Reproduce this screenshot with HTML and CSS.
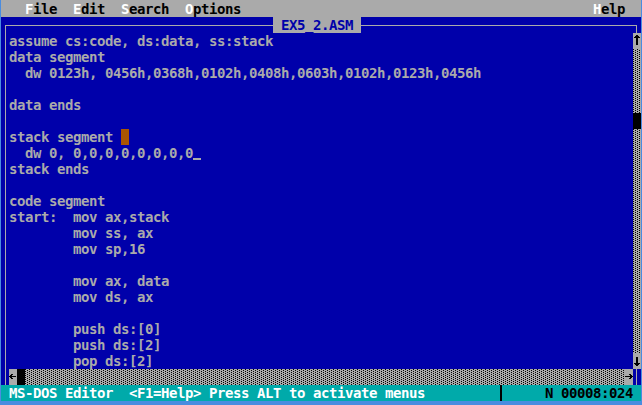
FILE: index.html
```html
<!DOCTYPE html>
<html>
<head>
<meta charset="utf-8">
<link rel="stylesheet" href="styles.css">
</head>
<body>
<div class="screen">
  <div class="menubar">
    <div class="menus">   <span class="hk">F</span>ile  <span class="hk">E</span>dit  <span class="hk">S</span>earch  <span class="hk">O</span>ptions</div>
    <div class="help"><span class="hk">H</span>elp  </div>
  </div>
  <div class="window">
    <div class="lside"><div class="lline"></div></div>
    <div class="titlebar">
      <div class="tline tl-left"></div>
      <div class="title"> EX5_2.ASM </div>
      <div class="tline tl-right"></div>
    </div>
    <div class="tr"><div class="trcorner"></div></div>
    <div class="editor">
<div class="ln">assume cs:code, ds:data, ss:stack</div>
<div class="ln">data segment</div>
<div class="ln">  dw 0123h, 0456h,0368h,0102h,0408h,0603h,0102h,0123h,0456h</div>
<div class="ln"></div>
<div class="ln">data ends</div>
<div class="ln"></div>
<div class="ln">stack segment <span class="sel"> </span></div>
<div class="ln">  dw 0, 0,0,0,0,0,0,0,0<span class="cur"></span></div>
<div class="ln">stack ends</div>
<div class="ln"></div>
<div class="ln">code segment</div>
<div class="ln">start:  mov ax,stack</div>
<div class="ln">        mov ss, ax</div>
<div class="ln">        mov sp,16</div>
<div class="ln"></div>
<div class="ln">        mov ax, data</div>
<div class="ln">        mov ds, ax</div>
<div class="ln"></div>
<div class="ln">        push ds:[0]</div>
<div class="ln">        push ds:[2]</div>
<div class="ln">        pop ds:[2]</div>
    </div>
    <div class="vscroll">
      <div class="btn"><svg width="8" height="16" viewBox="0 0 8 16" shape-rendering="crispEdges"><path d="M3 2h2v1H3zM2 3h4v1H2zM1 4h6v1H1zM3 5h2v7H3z" fill="#000"/></svg></div>
      <div class="track short"></div>
      <div class="thumb"></div>
      <div class="track grow"></div>
      <div class="btn"><svg width="8" height="16" viewBox="0 0 8 16" shape-rendering="crispEdges"><path d="M3 4h2v7H3zM1 10h6v1H1zM2 11h4v1H2zM3 12h2v1H3z" fill="#000"/></svg></div>
    </div>
    <div class="hscroll">
      <div class="btn"><svg width="8" height="16" viewBox="0 0 8 16" shape-rendering="crispEdges"><path d="M2 5h2v1H2zM1 6h2v1H1zM0 7h7v1H0zM1 8h2v1H1zM2 9h2v1H2z" fill="#000"/></svg></div>
      <div class="thumb"></div>
      <div class="track grow"></div>
      <div class="btn"><svg width="8" height="16" viewBox="0 0 8 16" shape-rendering="crispEdges"><path d="M4 5h2v1H4zM5 6h2v1H5zM0 7h8v1H0zM5 8h2v1H5zM4 9h2v1H4z" fill="#000"/></svg></div>
    </div>
    <div class="rside"><div class="rline"></div></div>
  </div>
  <div class="status">
    <div class="smsg"> MS-DOS Editor  &lt;F1=Help&gt; Press ALT to activate menus</div>
    <div class="sdiv"></div>
    <div class="spos">     N 00008:024 </div>
  </div>
</div>
</body>
</html>
```

FILE: styles.css
```css
* { box-sizing: border-box; }
html, body { margin: 0; padding: 0; }
body {
  background: #4a8ce0;
  width: 642px;
  height: 405px;
  overflow: hidden;
  font-family: "DejaVu Sans Mono", "Liberation Mono", monospace;
  font-weight: bold;
  font-size: 14px;
  letter-spacing: -0.43px;
  line-height: 16px;
}
.screen {
  width: 640px;
  margin-left: 1px;
  padding-top: 1px;
  background: #aaaaaa;
  display: flex;
  flex-direction: column;
}
.menubar {
  height: 16px;
  background: #aaaaaa;
  color: #000;
  display: flex;
  justify-content: space-between;
  white-space: pre;
}
.hk { color: #ffffff; }
.window {
  background: #0000aa;
  display: grid;
  grid-template-columns: 8px 624px 8px;
  grid-template-rows: 16px 336px 16px;
}
.lside { grid-row: 1 / 4; grid-column: 1; }
.lline {
  margin-left: 4px;
  margin-top: 8px;
  width: 4px;
  height: calc(100% - 8px);
  border-left: 1px solid #aaaaaa;
  border-top: 1px solid #aaaaaa;
}
.titlebar { grid-row: 1; grid-column: 2; display: flex; }
.tline { height: 9px; border-bottom: 1px solid #aaaaaa; }
.tl-left { width: 264px; }
.tl-right { flex: 1; }
.title {
  background: #aaaaaa;
  color: #0000aa;
  white-space: pre;
  width: 88px;
  height: 16px;
}
.tr { grid-row: 1; grid-column: 3; }
.trcorner {
  margin-top: 8px;
  width: 4px;
  height: 8px;
  border-top: 1px solid #aaaaaa;
  border-right: 1px solid #aaaaaa;
}
.editor {
  grid-row: 2;
  grid-column: 2;
  color: #aaaaaa;
  display: flex;
  flex-direction: column;
}
.ln { height: 16px; white-space: pre; }
.sel {
  display: inline-block;
  width: 8px;
  height: 16px;
  background: #aa5500;
  vertical-align: top;
}
.cur {
  display: inline-block;
  width: 8px;
  height: 16px;
  vertical-align: top;
  background: linear-gradient(#aaaaaa, #aaaaaa) 0 13px / 8px 2px no-repeat;
}
.vscroll {
  grid-row: 2;
  grid-column: 3;
  display: flex;
  flex-direction: column;
}
.btn { width: 8px; height: 16px; background: #aaaaaa; flex: none; }
.btn svg { display: block; }
.thumb { width: 8px; height: 16px; background: #000; flex: none; }
.track {
  background:
    conic-gradient(at 1px 1px, #0000 75%, #000 0) 0 0 / 4px 2px,
    conic-gradient(at 1px 1px, #0000 75%, #000 0) 2px 1px / 4px 2px,
    #aaaaaa;
}
.vscroll .short { height: 64px; flex: none; }
.grow { flex: 1; }
.hscroll { grid-row: 3; grid-column: 2; display: flex; }
.rside { grid-row: 3; grid-column: 3; }
.rline { margin-left: 3px; height: 16px; border-left: 1px solid #aaaaaa; }
.status {
  height: 16px;
  background: #00aaaa;
  display: flex;
  white-space: pre;
}
.smsg { color: #ffffff; width: 496px; }
.sdiv { width: 8px; height: 16px; background: linear-gradient(#000, #000) 3px 0 / 2px 16px no-repeat; }
.spos { color: #000; flex: 1; }
```
